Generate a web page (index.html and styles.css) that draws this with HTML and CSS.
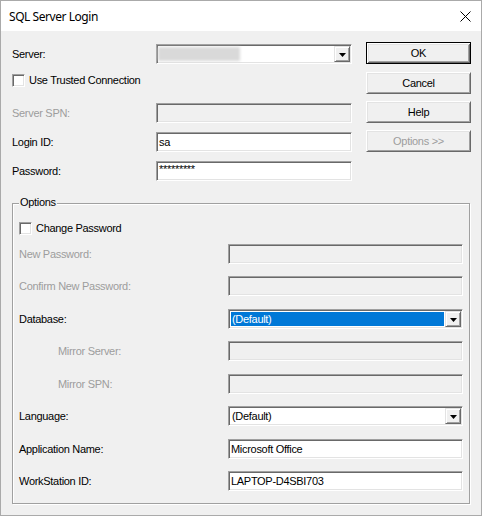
FILE: index.html
```html
<!DOCTYPE html>
<html>
<head>
<meta charset="utf-8">
<title>SQL Server Login</title>
<link rel="stylesheet" href="styles.css">
</head>
<body>
<div class="window">
  <div class="titlebar">
    <span class="title">SQL Server Login</span>
    <svg class="close" width="11" height="11" viewBox="0 0 11 11"><path d="M0.5 0.5L10.5 10.5M10.5 0.5L0.5 10.5" stroke="#000" stroke-width="1" fill="none"/></svg>
  </div>
  <div class="client">
    <div class="top">
      <div class="fields">
        <div class="row first">
          <span class="label top-label">Server:</span>
          <div class="combo sunken top-field">
            <div class="combo-text"><span class="blur"></span></div>
            <span class="drop"><svg width="7" height="4" viewBox="0 0 7 4"><path d="M0 0H7L3.5 4Z" fill="#000"/></svg></span>
          </div>
        </div>
        <div class="check-row trusted">
          <span class="checkbox sunken"></span>
          <span class="check-label">Use Trusted Connection</span>
        </div>
        <div class="row spn">
          <span class="label top-label disabled">Server SPN:</span>
          <div class="edit sunken top-field off"></div>
        </div>
        <div class="row g9">
          <span class="label top-label">Login ID:</span>
          <div class="edit sunken top-field">sa</div>
        </div>
        <div class="row g9">
          <span class="label top-label">Password:</span>
          <div class="edit sunken top-field password">*********</div>
        </div>
      </div>
      <div class="buttons">
        <div class="btn default">OK</div>
        <div class="btn b8">Cancel</div>
        <div class="btn b7">Help</div>
        <div class="btn b7 disabled">Options &gt;&gt;</div>
      </div>
    </div>

    <div class="group">
      <span class="legend">Options</span>
      <div class="check-row change">
        <span class="checkbox sunken"></span>
        <span class="check-label">Change Password</span>
      </div>
      <div class="row g9">
        <span class="label group-label disabled">New Password:</span>
        <div class="edit sunken group-field off"></div>
      </div>
      <div class="row g12">
        <span class="label group-label disabled">Confirm New Password:</span>
        <div class="edit sunken group-field off"></div>
      </div>
      <div class="row g13">
        <span class="label group-label">Database:</span>
        <div class="combo sunken group-field">
          <div class="combo-text"><span class="selected">(Default)</span></div>
          <span class="drop"><svg width="7" height="4" viewBox="0 0 7 4"><path d="M0 0H7L3.5 4Z" fill="#000"/></svg></span>
        </div>
      </div>
      <div class="row g12">
        <span class="label group-label indent disabled">Mirror Server:</span>
        <div class="edit sunken group-field off"></div>
      </div>
      <div class="row g13">
        <span class="label group-label indent disabled">Mirror SPN:</span>
        <div class="edit sunken group-field off"></div>
      </div>
      <div class="row g12">
        <span class="label group-label">Language:</span>
        <div class="combo sunken group-field">
          <div class="combo-text"><span class="value">(Default)</span></div>
          <span class="drop"><svg width="7" height="4" viewBox="0 0 7 4"><path d="M0 0H7L3.5 4Z" fill="#000"/></svg></span>
        </div>
      </div>
      <div class="row g13">
        <span class="label group-label">Application Name:</span>
        <div class="edit sunken group-field">Microsoft Office</div>
      </div>
      <div class="row g12">
        <span class="label group-label">WorkStation ID:</span>
        <div class="edit sunken group-field">LAPTOP-D4SBI703</div>
      </div>
    </div>
  </div>
</div>
</body>
</html>
```

FILE: styles.css
```css
html, body {
  margin: 0;
  padding: 0;
  background: #f0f0f0;
}

.window {
  width: 482px;
  height: 516px;
  box-sizing: border-box;
  border: 1px solid #aaaaaa;
  background: #f0f0f0;
  font-family: "Liberation Sans", Arial, sans-serif;
  font-size: 11px;
  letter-spacing: -0.3px;
  color: #000;
  display: flex;
  flex-direction: column;
  overflow: hidden;
}

.titlebar {
  height: 30px;
  background: #fff;
  display: flex;
  align-items: center;
  justify-content: space-between;
  padding: 0 10px 0 8px;
  flex: none;
}

.title {
  font-family: "Noto Sans", "Open Sans", sans-serif;
  font-size: 12px;
  letter-spacing: -0.45px;
  color: #000;
}

.close {
  display: block;
}

.client {
  display: flex;
  flex-direction: column;
  padding: 0 10px 0 11px;
}

.top {
  display: flex;
  align-items: flex-start;
  gap: 14px;
}

.fields {
  width: 340px;
  display: flex;
  flex-direction: column;
}

.row {
  display: flex;
  align-items: center;
  height: 20px;
  flex: none;
}

.row.first { margin-top: 13px; }
.row.spn { margin-top: 16px; }
.g9 { margin-top: 9px; }
.g12 { margin-top: 12px; }
.g13 { margin-top: 13px; }

.label {
  white-space: nowrap;
  line-height: 13px;
}

.top-label { width: 144px; flex: none; }
.group-label { width: 209px; flex: none; }
.indent { padding-left: 39px; box-sizing: border-box; }

.disabled { color: #9d9d9d; }

.sunken {
  border: 1px solid;
  border-color: #a0a0a0 #ffffff #ffffff #a0a0a0;
  box-shadow: inset 1px 1px 0 #696969, inset -1px -1px 0 #e3e3e3;
  box-sizing: border-box;
}

.top-field { width: 196px; }
.group-field { width: 235px; }

.edit {
  height: 20px;
  background: #fff;
  padding: 0 2px;
  line-height: 18px;
  white-space: nowrap;
  overflow: hidden;
}

.edit.off { background: #f0f0f0; }

.password {
  letter-spacing: -0.3px;
  line-height: 14px;
}

.combo {
  height: 20px;
  background: #fff;
  padding: 1px;
  display: flex;
}

.combo-text {
  flex: 1;
  display: flex;
  padding: 1px;
  min-width: 0;
}

.blur {
  width: 82px;
  height: 100%;
  background: #d9d9d9;
  filter: blur(1.5px);
  margin-left: -1px;
}

.selected {
  flex: 1;
  background: #0078d7;
  color: #fff;
  line-height: 14px;
  padding-left: 1px;
}

.value {
  line-height: 14px;
  padding-left: 1px;
}

.drop {
  width: 16px;
  height: 16px;
  flex: none;
  box-sizing: border-box;
  background: #f0f0f0;
  border: 1px solid;
  border-color: #e3e3e3 #696969 #696969 #e3e3e3;
  box-shadow: inset 1px 1px 0 #ffffff, inset -1px -1px 0 #a0a0a0;
  display: flex;
  align-items: center;
  justify-content: center;
}

.drop svg { display: block; margin-top: 1px; }

.check-row {
  display: flex;
  align-items: center;
  height: 13px;
  flex: none;
}

.check-row.trusted { margin-top: 10px; }
.check-row.change { margin-top: 18px; }

.checkbox {
  width: 13px;
  height: 13px;
  background: #fff;
  flex: none;
}

.check-label {
  margin-left: 4px;
  white-space: nowrap;
  line-height: 13px;
}

.buttons {
  width: 105px;
  display: flex;
  flex-direction: column;
  margin-top: 11px;
}

.btn {
  height: 22px;
  box-sizing: border-box;
  display: flex;
  align-items: center;
  justify-content: center;
  background: #f0f0f0;
  border: 1px solid;
  border-color: #ffffff #696969 #696969 #ffffff;
  box-shadow: inset 1px 1px 0 #e3e3e3, inset -1px -1px 0 #a0a0a0;
  flex: none;
}

.btn.default {
  border-color: #000;
  box-shadow: inset 1px 1px 0 #ffffff, inset -1px -1px 0 #696969, inset 2px 2px 0 #e3e3e3, inset -2px -2px 0 #a0a0a0;
}

.b8 { margin-top: 8px; }
.b7 { margin-top: 7px; }

.group {
  position: relative;
  margin-top: 22px;
  width: 458px;
  height: 301px;
  box-sizing: border-box;
  border: 1px solid #a0a0a0;
  box-shadow: 1px 1px 0 #ffffff, inset 1px 1px 0 #ffffff;
  padding: 0 6px 12px 6px;
  display: flex;
  flex-direction: column;
}

.legend {
  position: absolute;
  top: -8px;
  left: 6px;
  padding: 0 1px;
  background: #f0f0f0;
  line-height: 13px;
}
```
